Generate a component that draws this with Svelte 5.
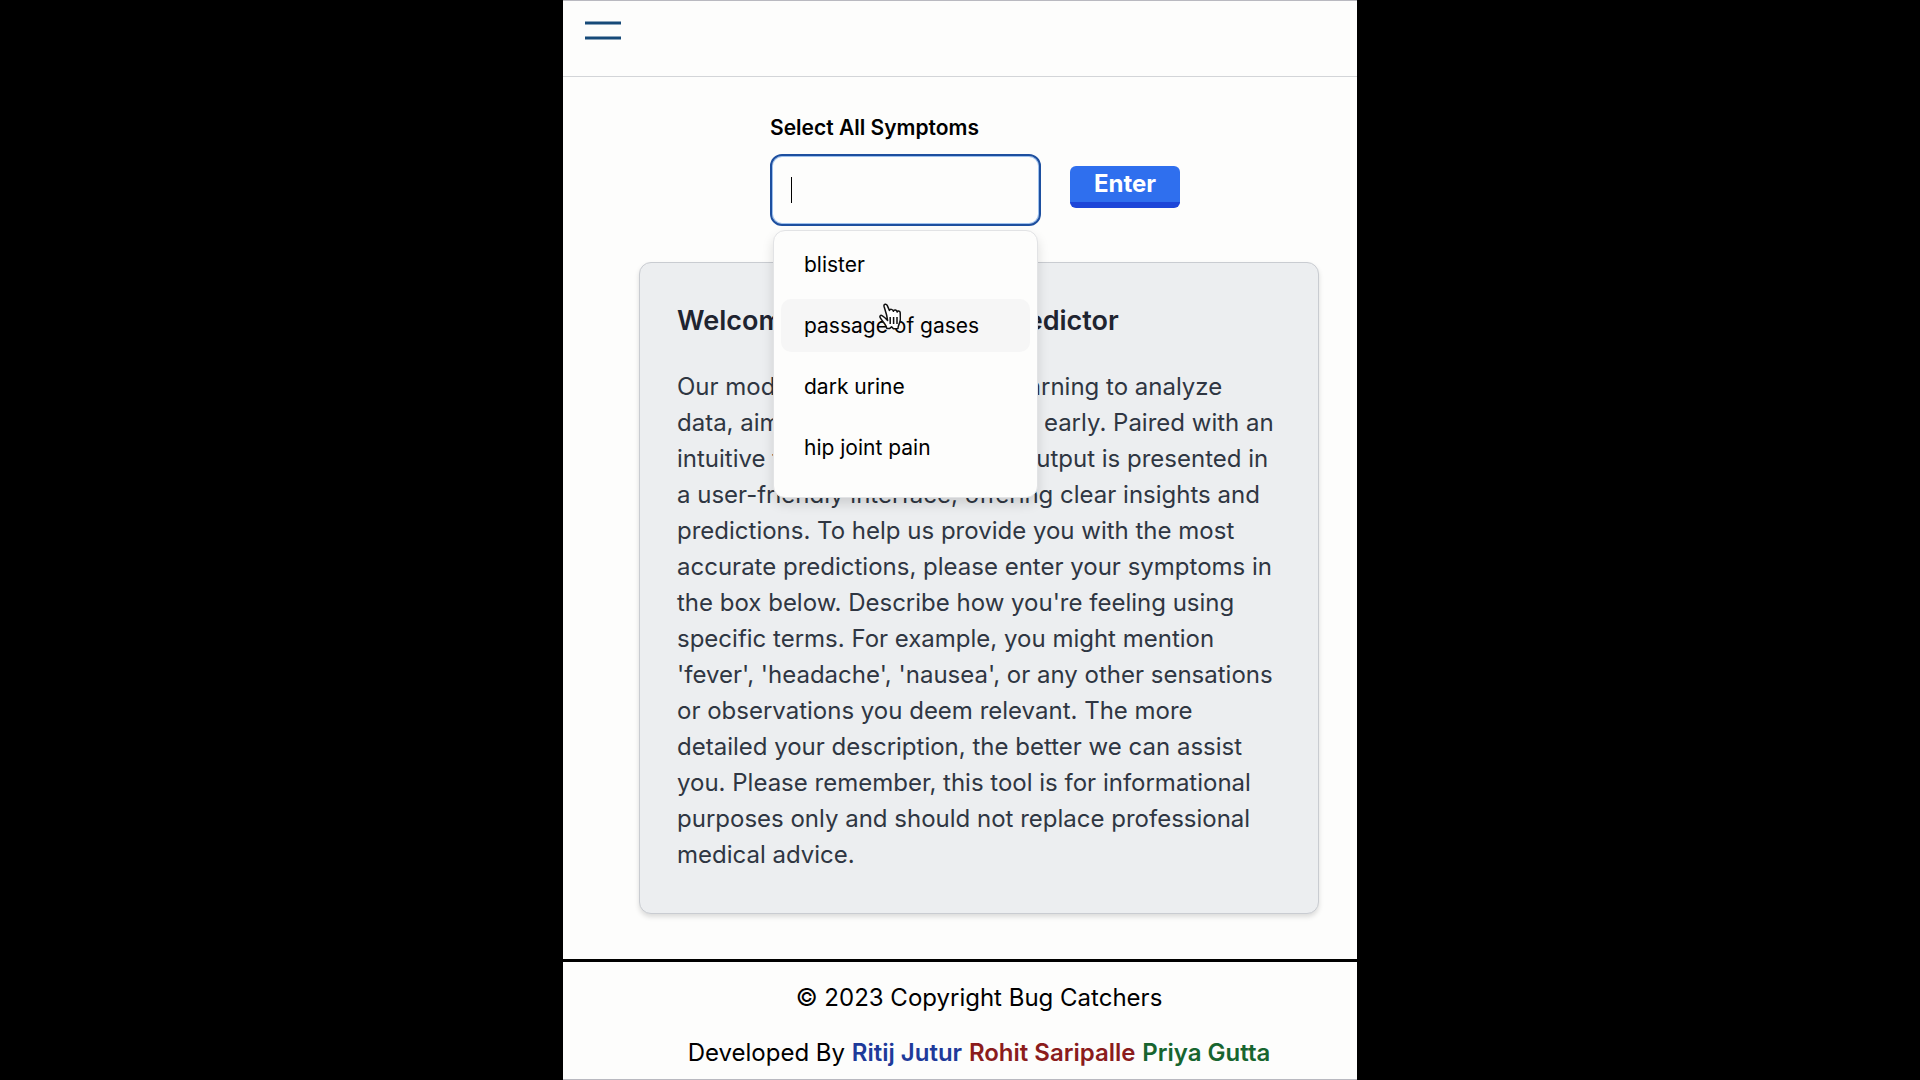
<script>
  const options = ['blister', 'passage of gases', 'dark urine', 'hip joint pain'];
  const authors = [
    { name: 'Ritij Jutur', tone: 'blue' },
    { name: 'Rohit Saripalle', tone: 'red' },
    { name: 'Priya Gutta', tone: 'green' },
  ];
  let active = $state(1);
  let query = $state('');
</script>

<div class="page">
  <header>
    <button class="menu" aria-label="Open menu">
      <svg viewBox="0 0 36 20" aria-hidden="true">
        <path d="M0 2H36M0 17H36" />
      </svg>
    </button>
  </header>

  <main>
    <form onsubmit={(e) => e.preventDefault()}>
      <div class="field">
        <label for="symptoms">Select All Symptoms</label>
        <div class="combo">
          <input id="symptoms" type="text" autocomplete="off" bind:value={query} />
          <span class="caret" aria-hidden="true"></span>
          <ul class="options">
            {#each options as option, i}
              <li>
                <button type="button" class:active={i === active} onmouseenter={() => (active = i)}>{option}</button>
              </li>
            {/each}
          </ul>
          <svg class="pointer" viewBox="0 0 22 27" aria-hidden="true">
            <path
              d="M8.6 17.4 C7 15.6 5.4 14 3.4 12.8 C1.4 11.6 .4 13.2 1.2 14.6 C2.6 17 4 18.6 5.6 20.6 C6.8 22.2 7.2 23 7.8 25.4 L10.4 25.6 L12.6 23.8 L14.4 25.8 L19 25.4 C18.8 22.6 21.4 19.6 21.4 16 L21.2 9.6 C21 7.8 18.6 7.6 18.2 9 C17.8 6.8 15 6.4 14.4 8.2 C13.8 6 11 5.8 10.4 7.4 L8.2 2.4 C7.2 .4 4.6 1.2 5 3.2 L7.6 12 Z"
            />
            <path d="M11.2 14V21M14.6 14V21M18 14V21" />
          </svg>
        </div>
      </div>
      <button class="enter">Enter</button>
    </form>

    <article>
      <h1>Welcome to our Disease Predictor</h1>
      <p>
        Our model employs machine learning to analyze data, aiming to predict diseases early. Paired with an intuitive
        frontend, the model's output is presented in a user-friendly interface, offering clear insights and predictions.
        To help us provide you with the most accurate predictions, please enter your symptoms in the box below. Describe
        how you're feeling using specific terms. For example, you might mention 'fever', 'headache', 'nausea', or any
        other sensations or observations you deem relevant. The more detailed your description, the better we can assist
        you. Please remember, this tool is for informational purposes only and should not replace professional medical
        advice.
      </p>
    </article>
  </main>

  <footer>
    <p>© 2023 Copyright Bug Catchers</p>
    <p>
      Developed By
      {#each authors as author}<a href="#{author.tone}" class={author.tone}>{author.name}</a>{' '}{/each}
    </p>
  </footer>
</div>

<style>
  :global(body) {
    margin: 0;
    background: #000;
  }
  .page,
  .page * {
    box-sizing: border-box;
  }
  .page {
    display: flex;
    flex-direction: column;
    max-width: 794px;
    min-height: 100vh;
    margin: 0 auto;
    background: #fdfdfc;
    color: #000;
    font-family: Inter, 'Liberation Sans', sans-serif;
    font-size: 24px;
    line-height: 36px;
  }
  button,
  input {
    font: inherit;
    color: inherit;
  }
  header {
    display: flex;
    align-items: flex-start;
    height: 77px;
    padding: 20px 22px;
    border-top: 1px solid #b9b9c0;
    border-bottom: 1px solid #d3d5d8;
  }
  .menu {
    padding: 0;
    border: 0;
    background: none;
    line-height: 0;
    cursor: pointer;
  }
  .menu svg {
    width: 36px;
    height: 20px;
    fill: none;
    stroke: #164a78;
    stroke-width: 3;
  }
  main {
    flex: 1;
    padding: 35px 38px 45px 76px;
  }
  form {
    display: flex;
    align-items: flex-end;
    gap: 29px;
    padding-left: 131px;
    margin-bottom: 36px;
  }
  .field {
    width: 271px;
  }
  label {
    display: block;
    margin-bottom: 10px;
    font-size: 21px;
    font-weight: 600;
    line-height: 32px;
  }
  .combo {
    position: relative;
  }
  input {
    display: block;
    width: 100%;
    height: 72px;
    padding: 0 20px;
    border: 2px solid #1d4f9f;
    border-radius: 12px;
    outline: 0;
    background: #fdfdfc;
    box-shadow: inset 0 0 0 1px #9cc0ee;
    caret-color: transparent;
  }
  .caret {
    position: absolute;
    top: 23px;
    left: 21px;
    width: 1px;
    height: 26px;
    background: #000;
  }
  .options {
    position: absolute;
    top: 76px;
    left: 3px;
    right: 3px;
    display: grid;
    gap: 8px;
    height: 268px;
    margin: 0;
    padding: 7px;
    border: 1px solid #e2e3e5;
    border-radius: 12px;
    background: #fdfdfc;
    box-shadow: 0 6px 12px #0002;
    list-style: none;
    align-content: start;
  }
  .options button {
    display: block;
    width: 100%;
    height: 53px;
    padding: 0 23px;
    border: 0;
    border-radius: 10px;
    background: none;
    font-size: 21px;
    text-align: left;
    cursor: pointer;
  }
  .options button.active {
    background: #f6f6f6;
  }
  .pointer {
    position: absolute;
    top: 149px;
    left: 109px;
    width: 22px;
    height: 27px;
    fill: #fff;
    stroke: #111;
    stroke-width: 1.5;
    stroke-linejoin: round;
    pointer-events: none;
  }
  .enter {
    height: 42px;
    margin-bottom: 18px;
    padding: 0 24px;
    border: 0;
    border-bottom: 6px solid #1d46d8;
    border-radius: 6px;
    background: #2f6fee;
    color: #fff;
    font-weight: 700;
    line-height: 36px;
    cursor: pointer;
  }
  article {
    padding: 38px 36px 40px 37px;
    border: 1px solid #c9ccd1;
    border-radius: 12px;
    background: #eceef0;
    box-shadow: 0 3px 5px #0002;
  }
  h1 {
    margin: 0 0 28px;
    color: #1f2430;
    font-size: 27px;
    font-weight: 600;
    line-height: 40px;
    white-space: nowrap;
  }
  article p {
    margin: 0;
    color: #2f3642;
  }
  footer {
    display: grid;
    gap: 19px;
    padding: 18px 0 8px 38px;
    border-top: 3px solid #000;
    border-bottom: 1px solid #b9b9c0;
    text-align: center;
  }
  footer p {
    margin: 0;
  }
  footer a {
    font-weight: 600;
    text-decoration: none;
  }
  .blue {
    color: #1e3a9a;
  }
  .red {
    color: #8b1c1c;
  }
  .green {
    color: #17652f;
  }
</style>
